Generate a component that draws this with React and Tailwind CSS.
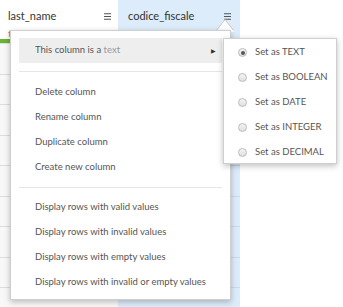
import React from 'react';

const rows = ['', '', '', '', '', '', '', '', ''];

const MenuIcon = () => (
  <svg width="7" height="7" viewBox="0 0 7 7" className="text-[#555]">
    <path d="M0 0.75h7M0 3.5h7M0 6.25h7" stroke="currentColor" strokeWidth="1.1" />
  </svg>
);

const Radio = ({ checked }) => (
  <span className="w-[9px] h-[9px] rounded-full border border-[#bbb] bg-gradient-to-b from-[#f4f4f4] to-[#e0e0e0] flex items-center justify-center">
    {checked && <span className="w-[4px] h-[4px] rounded-full bg-[#555]" />}
  </span>
);

const App = () => {
  const mainItems = ['Delete column', 'Rename column', 'Duplicate column', 'Create new column'];
  const filterItems = [
    'Display rows with valid values',
    'Display rows with invalid values',
    'Display rows with empty values',
    'Display rows with invalid or empty values',
  ];
  const types = ['TEXT', 'BOOLEAN', 'DATE', 'INTEGER', 'DECIMAL'];

  return (
    <div className="relative w-[343px] h-[307px] overflow-hidden bg-white font-['Lato',sans-serif]">
      {/* Table behind the menu */}
      <div className="grid grid-cols-[118px_122px_1fr] h-full">
        {/* column 1 */}
        <div className="flex flex-col bg-white">
          <div className="h-[39px] pl-2 pr-[7px] pt-[8px] flex flex-col">
            <div className="flex items-center justify-between">
              <span className="text-[11px] text-[#333] leading-[16px]">last_name</span>
              <MenuIcon />
            </div>
            <span className="mt-[3px] text-[10px] text-[#888] leading-[12px]">text</span>
          </div>
          <div className="h-[4px] bg-[#6ab334]" />
          <div className="h-px bg-[#ddd]" />
          {rows.map((r, i) => (
            <div key={i} className="h-[30.5px] shrink-0 border-b border-[#ddd] bg-[#f8f8f8] px-2 flex items-end">
              {i === 8 && <span className="text-[11px] text-[#333] leading-[12px]">Mar Ino</span>}
            </div>
          ))}
        </div>
        {/* column 2 */}
        <div className="flex flex-col bg-[#dcecfa]">
          <div className="h-[39px] pl-[10px] pr-[9px] pt-[8px] flex flex-col">
            <div className="flex items-center justify-between">
              <span className="text-[11px] text-[#333] leading-[16px]">codice_fiscale</span>
              <MenuIcon />
            </div>
            <span className="mt-[3px] text-[10px] text-[#888] leading-[12px]">text</span>
          </div>
          <div className="h-[4px] bg-[#6ab334]" />
          <div className="h-px bg-[#c9dbe9]" />
          {rows.map((r, i) => (
            <div key={i} className="h-[30.5px] shrink-0 border-b border-[#c9dbe9] px-[10px] flex items-end">
              {i === 8 && <span className="text-[11px] text-[#333] leading-[12px]">DHFYRR72A01C412J</span>}
            </div>
          ))}
        </div>
        <div className="bg-white" />
      </div>

      {/* caret */}
      <svg className="absolute left-[216px] top-[19px]" width="18" height="13" viewBox="0 0 18 13">
        <path d="M0 12 L9 0.5 L18 12" fill="white" stroke="#c8c8c8" strokeWidth="1" />
        <rect x="0" y="11.5" width="18" height="2" fill="white" />
      </svg>

      {/* dropdown menu */}
      <div className="absolute left-[10px] top-[30px] w-[221px] h-[270px] bg-white border border-[#cfcfcf] shadow-[0_2px_6px_rgba(0,0,0,0.25)] px-[8px] pt-[7px] text-[9.5px] text-[#555]">
        <div className="h-[25px] bg-[#eeeeee] flex items-center justify-between pl-[16px] pr-[6px]">
          <span>
            This column is a <span className="text-[#999]">text</span>
          </span>
          <span className="text-[6px] text-[#333]">&#9654;</span>
        </div>
        <div className="h-px bg-[#e6e6e6] my-[8px]" />
        {mainItems.map((t) => (
          <div key={t} className="h-[25px] flex items-center pl-[16px]">{t}</div>
        ))}
        <div className="h-px bg-[#e6e6e6] my-[7px]" />
        {filterItems.map((t) => (
          <div key={t} className="h-[25px] flex items-center pl-[16px]">{t}</div>
        ))}
      </div>

      {/* submenu */}
      <div className="absolute left-[223px] top-[38px] w-[114px] h-[126px] bg-white border border-[#cfcfcf] shadow-[0_2px_6px_rgba(0,0,0,0.25)] pt-px text-[9.5px] text-[#555]">
        {types.map((t, i) => (
          <div key={t} className="h-[25px] flex items-center gap-[8px] pl-[14px]">
            <Radio checked={i === 0} />
            <span>Set as {t}</span>
          </div>
        ))}
      </div>
    </div>
  );
};

export default App;
